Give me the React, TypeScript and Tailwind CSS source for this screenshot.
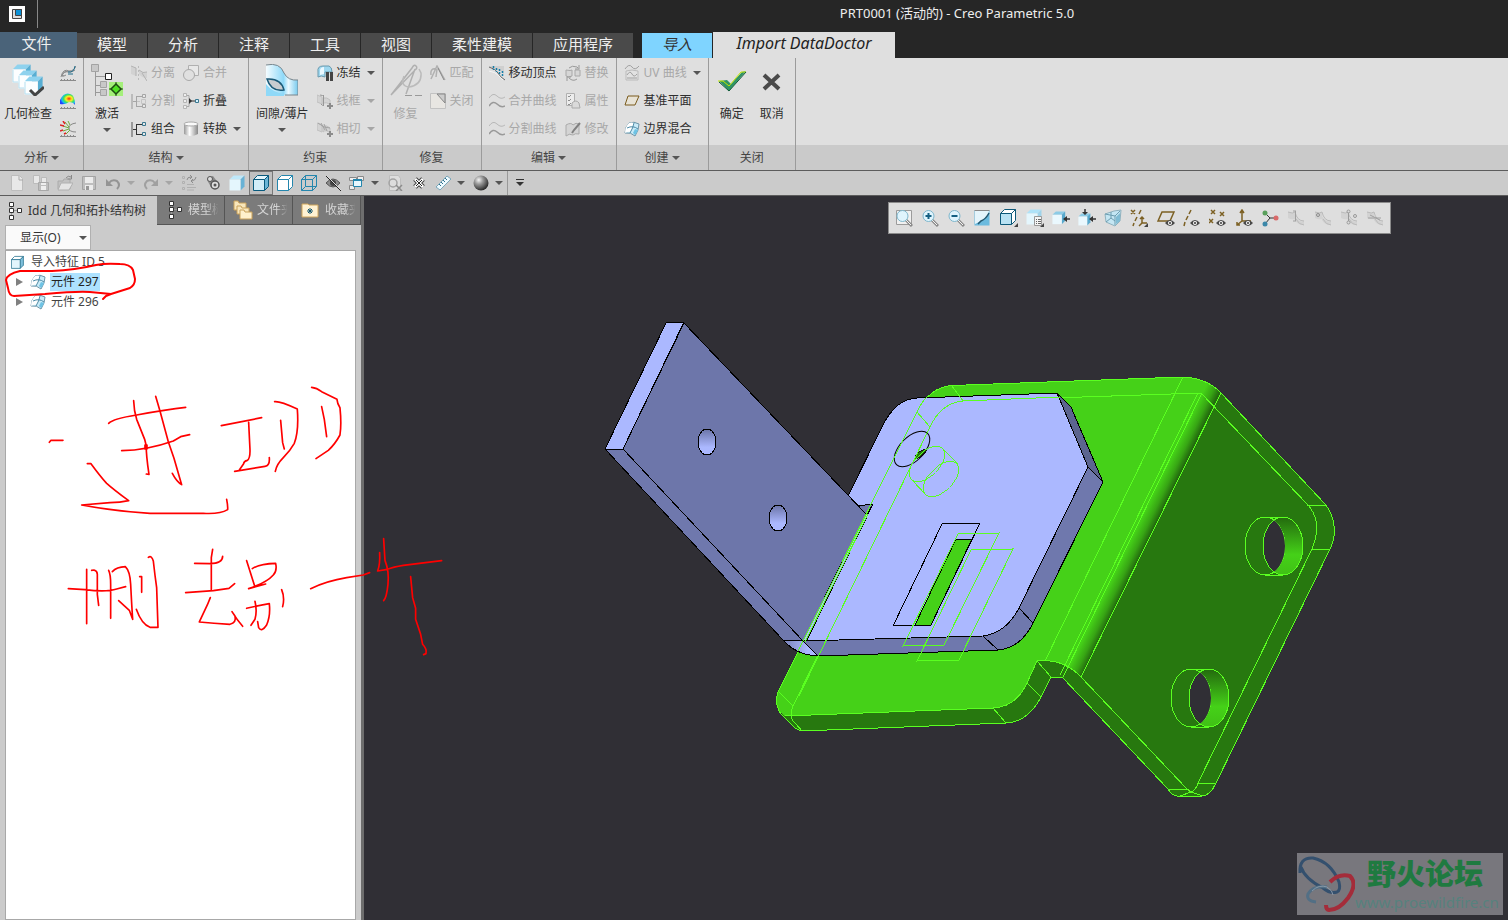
import type { ReactNode } from "react";

interface SvgProps {
  size?: number;
  width?: number;
  className?: string;
  children: ReactNode;
}

const Svg = ({ size = 16, width, className = "", children }: SvgProps) => (
  <svg
    width={width ?? size}
    height={size}
    viewBox={`0 0 ${width ?? size} ${size}`}
    fill="none"
    aria-hidden="true"
    className={`shrink-0 ${className}`}
  >
    {children}
  </svg>
);

const Caret = ({ light = false }: { light?: boolean }) => (
  <Svg size={4} width={8}>
    <path d="M0 0h8L4 4z" fill={light ? "#a6a6a6" : "#555"} />
  </Svg>
);

const Cube = ({ x = 0, y = 0, s = 1, top = "#c9ecfb", front = "#fff", side = "#4fa8d0", line = "none" }) => (
  <g transform={`translate(${x} ${y}) scale(${s})`} stroke={line} strokeLinejoin="round">
    <path d="M.5 4.500l4-4h11l-4 4z" fill={top} />
    <path d="M11.500 4.500l4-4v11l-4 4z" fill={side} />
    <path d="M.5 4.500h11v11H.5z" fill={front} />
  </g>
);

const Ruler = ({ y = 15 }) => (
  <path d={`M0 ${y + 0.5}h16M1.500 ${y - 1}v1M4.500 ${y - 1}v1M7.500 ${y - 1}v1M10.500 ${y - 1}v1M13.500 ${y - 1}v1`} stroke="#8a8a8a" />
);

const Eye = ({ x = 0, y = 0 }) => (
  <g transform={`translate(${x} ${y})`}>
    <path d="M0 3q5-6 10 0q-5 6-10 0z" fill="#4a4a4a" />
    <circle cx="5" cy="3" r="2" fill="#fff" />
    <circle cx="5" cy="3" r="1" fill="#333" />
  </g>
);

const Quilt = () => (
  <Svg>
    <path d="M5 2q5-2 10 1q0 6-4 12q-4-4-10-3q0-6 4-10z" fill="#c9ebf8" stroke="#6c95a8" />
    <path d="M5 2q3-1 5 0q-1 5-3 9-3-1-6 1q0-6 4-10z" fill="#fff" />
    <path d="M10 2q-1 5-4 10M3 7q6-3 11 1" stroke="#4c8aa6" />
    <path d="M11 8l3 1q-1 3-3 5l-2-2z" fill="#6fc3e4" />
  </Svg>
);

const Wave = () => (
  <Svg>
    <path d="M0 5q4-6 8-2t8 1" stroke="#b8b8b8" />
    <path d="M0 13q4-6 8-2t8 2" stroke="#999" strokeWidth="1.500" />
  </Svg>
);

const Brackets = ({ off = false, mid = false }) => (
  <Svg>
    <path d="M1 1v15" stroke={off ? "#bbb" : "#999"} strokeWidth="2" />
    <path d="M2 8.500h4M5.500 3v11M5 3.500h6M5 13.500h6" stroke={off ? "#a5a5a5" : "#333"} />
    {mid && <path d="M6 8.500h3M10.500 6.500h4v4h-4z" stroke="#c4c4c4" />}
    <path d="M11.500 1.500h3v3h-3zM11.500 11.500h3v3h-3z" fill="#e6e6e6" stroke={off ? "#a5a5a5" : "#3b7890"} />
  </Svg>
);

const CurvePlus = ({ bars = false }) => (
  <Svg>
    <path d="M0 2l5 2v7l-5-2zM6 5q4-1 7 2v5q-4-4-7-1z" fill="#d3d3d3" stroke="#c0c0c0" />
    {bars ? <path d="M1 2l6 4 6 1M4 2l4 7M7 3l3 7" stroke="#a3a3a3" /> : <path d="M6.500 2v11M3 2q3 0 4 2M7 12q-2 1-3-1" stroke="#979797" />}
    <path d="M13 10v6M10 13h6" stroke="#8c8c8c" strokeWidth="2" />
  </Svg>
);

const Sheet = ({ kind }: { kind: "line" | "dot" | "dots" | "cross" }) => (
  <Svg size={18}>
    <path d="M1 3q5 2 7 0v7q-4 1-7-1zM8 7q4 7 9 5v4q-7 0-9-5z" fill="#d2d2d2" />
    <path d="M1 3q5 2 7 0q2 9 9 9M9 10q3 6 8 6" stroke="#bababa" />
    {kind === "line" && <path d="M8.500 2v10M6 2h3M6 12h3" stroke="#a0a0a0" />}
    {kind === "dot" && <circle cx="4" cy="6" r="1.500" stroke="#8c8c8c" />}
    {kind === "dots" && (
      <g stroke="#999">
        <path d="M8.500 4v8" />
        <circle cx="8.500" cy="2.500" r="1.500" />
        <circle cx="8.500" cy="13.500" r="1.500" />
        <circle cx="15" cy="7" r="1.500" />
      </g>
    )}
    {kind === "cross" && <path d="M2 9h13M4 6l10 5" stroke="#a0a0a0" />}
  </Svg>
);

const Magnifier = ({ sign = "" }) => (
  <Svg size={18}>
    {sign === "" && <path d="M1.500 1.500h15v14h-15z" fill="#f0f0f0" stroke="#9b9b9b" />}
    <path d="M10 10l7 7" stroke="#8a8a8a" strokeWidth="3" />
    <path d="M11 11l5 5" stroke="#f4f4f4" />
    <circle cx="7.500" cy="7" r="5.500" fill="#dff4fd" stroke="#7eb6cc" />
    {sign !== "" && <path d={sign} stroke="#156083" strokeWidth="2" />}
  </Svg>
);

const BoxTree = ({ className = "" }) => (
  <Svg size={20} width={14} className={className}>
    <path d="M3.500 3v13M5 9.500h4" stroke="#999" />
    <path d="M1.500 1.500h4v4h-4zM1.500 7.500h4v4h-4zM1.500 14.500h4v4h-4zM9.500 7.500h4v4h-4z" fill="#fff" stroke="#333" />
  </Svg>
);

const icons: Record<string, ReactNode> = {
  analyzeCurve: (
    <Svg>
      <path d="M1 12q2-9 8-6q5 0 7-5M3 12q-2-5 5-6M6 10q-2 2-4 0q2-4 7-3q4 0 6-2" stroke="#8a8a8a" />
      <path d="M8 7q6 1 7-6M8 9h5" stroke="#1d6b8a" />
      <Ruler />
    </Svg>
  ),
  rainbow: (
    <Svg>
      <defs>
        <radialGradient id="rainbow" cx=".6" cy=".45" r=".6">
          <stop offset="0" stopColor="#ff2a10" />
          <stop offset=".35" stopColor="#ffef20" />
          <stop offset=".6" stopColor="#3be060" />
          <stop offset=".8" stopColor="#18bff0" />
          <stop offset="1" stopColor="#2443ff" />
        </radialGradient>
      </defs>
      <path d="M0 7q4-8 10-6q5 1 5 11q-2-3-6-3-4 3-9 2z" fill="url(#rainbow)" />
      <Ruler />
    </Svg>
  ),
  spikes: (
    <Svg>
      <path d="M16 2q-7 1-7 5t7 4" stroke="#888" />
      <path d="M9 7L3 5M9 6L5 1M10 4L8 0M9 8l-6 2M10 9l-4 4" stroke="#6fae3d" />
      <path d="M4 5L0 4M5 3L3 0M3 9l-3 1M6 12l-2 1" stroke="#d22" strokeWidth="1.500" />
      <Ruler />
    </Svg>
  ),
  detach: (
    <Svg>
      <path d="M0 1l5 2v8l-5-2zM8 5q4 4 8 2v6q-5 0-8-4z" fill="#d2d2d2" />
      <path d="M0 1l5 2v8M8 5q4 4 8 2M11 8l5 8" stroke="#b2b2b2" />
      <path d="M7.500 1v14" stroke="#bbb" strokeDasharray="2 2" />
    </Svg>
  ),
  merge: (
    <Svg>
      <path d="M5.500.500h10v10h-10z" fill="#e8e8e8" stroke="#b0b0b0" />
      <circle cx="6" cy="10" r="5.500" fill="#e0e0e0" stroke="#a8a8a8" />
    </Svg>
  ),
  split: <Brackets off mid />,
  combine: <Brackets />,
  collapse: (
    <Svg>
      <path d="M3 2.500h3v11H3" stroke="#aaa" />
      <path d="M.5.500h3v3h-3zM.5 6.500h3v3h-3zM.5 12.500h3v3h-3z" fill="#eee" stroke="#b5b5b5" />
      <path d="M6 5l3 3-3 3z" fill="#333" />
      <path d="M6 8h6" stroke="#333" />
      <path d="M12.500 6.500h3v3h-3z" fill="#d6f2ff" stroke="#3b7890" />
    </Svg>
  ),
  convert: (
    <Svg>
      <defs>
        <linearGradient id="cyl">
          <stop offset="0" stopColor="#999" />
          <stop offset=".4" stopColor="#fff" />
          <stop offset="1" stopColor="#888" />
        </linearGradient>
      </defs>
      <path d="M1 3q7-4 14 0v10q-7 4-14 0z" fill="url(#cyl)" />
      <ellipse cx="8" cy="3" rx="7" ry="2" fill="#fafafa" stroke="#aaa" />
    </Svg>
  ),
  freeze: (
    <Svg>
      <path d="M1 7q-1-6 5-6h6q3 1 3 6H8v5q-4-2-7 0z" fill="#9ed7ef" stroke="#6a9aae" />
      <path d="M3 6q0-4 4-4v7l-4 1z" fill="#eaf8ff" />
      <path d="M9 7h3v9H9zM13 7h3v9h-3z" fill="#444" />
    </Svg>
  ),
  wireframe: <CurvePlus />,
  tangent: <CurvePlus bars />,
  match: (
    <Svg>
      <path d="M1 14L7 1l8 14M1 10Q0 3 6 4M7 4L6 12" stroke="#b0b0b0" strokeWidth="1.500" />
      <path d="M8 3l6 12" stroke="#888" />
    </Svg>
  ),
  closeGap: (
    <Svg>
      <path d="M.5.500h15v15H.5z" fill="#e8e6e2" stroke="#c2c2c2" />
      <path d="M7 1h8v9z" fill="#ccc" stroke="#888" />
    </Svg>
  ),
  moveVertex: (
    <Svg>
      <path d="M0 1h15v8q-4-4-7-4-4-1-8-4z" fill="#cfcfcf" />
      <path d="M0 2q7 2 9 6t7 7" stroke="#666" />
      <path d="M0 6q6 1 9 4t5 5" stroke="#f4f4f4" />
      <path d="M4.500 1v4M7.500 3v4M10.500 4v6M13.500 6v6" stroke="#157da8" strokeWidth="1.500" strokeDasharray="2 1" />
    </Svg>
  ),
  wave: <Wave />,
  replace: (
    <Svg>
      <path d="M1 5q5 1 6 0v6q-4 2-6 0zM10 5h5v6h-5z" fill="#d6d6d6" stroke="#a8a8a8" />
      <path d="M4 3q3-3 8-1l1 1M14 0v4h-4M12 14q-4 3-8-1M2 16v-4h4" stroke="#999" />
    </Svg>
  ),
  attributes: (
    <Svg>
      <path d="M1.500.500h8v12h-8z" fill="#ececec" stroke="#b0b0b0" />
      <path d="M3 3l1 1 2-2M3 7l1 1 2-2M3 11l1 1 2-2" stroke="#8e8e8e" />
      <path d="M7 15v-5q4-4 7 0l1 5z" fill="#dadada" stroke="#aaa" />
    </Svg>
  ),
  modify: (
    <Svg>
      <path d="M1 4q5-3 7 0q3-3 6-1v10q-4-1-6 1-4-2-7 1z" fill="#d4d4d4" stroke="#aaa" />
      <path d="M15 2l-6 7-2 3" stroke="#808080" strokeWidth="2" />
    </Svg>
  ),
  uvCurve: (
    <Svg>
      <path d="M2 6q6-2 12 0v9H2z" fill="#e2e2e2" stroke="#bbb" />
      <path d="M1 4q4-6 7-2t7-1M3 10q3-5 5-1t5 0M3 13h10" stroke="#a0a0a0" />
    </Svg>
  ),
  plane: (
    <Svg>
      <path d="M4 3h11l-4 9H1z" fill="#e8e3d6" stroke="#7a5b1c" />
    </Svg>
  ),
  quilt: <Quilt />,
};

interface RibbonItemProps {
  icon: string;
  label?: string;
  off?: boolean;
  menu?: boolean;
  name?: string;
}

const RibbonItem = ({ icon, label, off, menu, name }: RibbonItemProps) => (
  <button
    type="button"
    disabled={off}
    aria-label={label ?? name}
    className={`flex h-7 items-center gap-1 whitespace-nowrap ${off ? "text-[#a8a8a8]" : "text-[#2e2e2e]"}`}
  >
    {icons[icon]}
    {label && <span>{label}</span>}
    {menu && (
      <span className="ml-auto pl-0.5">
        <Caret light={off && icon !== "uvCurve"} />
      </span>
    )}
  </button>
);

const Column = ({ items }: { items: RibbonItemProps[] }) => (
  <div className="flex flex-col">
    {items.map((item) => (
      <RibbonItem key={item.label ?? item.name} {...item} />
    ))}
  </div>
);

interface BigButtonProps {
  label: string;
  icon: ReactNode;
  off?: boolean;
  menu?: boolean;
}

const BigButton = ({ label, icon, off, menu }: BigButtonProps) => (
  <button
    type="button"
    disabled={off}
    className={`flex min-w-8 flex-col items-center whitespace-nowrap pt-[5px] ${off ? "text-[#a8a8a8]" : "text-[#2e2e2e]"}`}
  >
    {icon}
    <span className="mt-2.5 mb-1.5 leading-4">{label}</span>
    {menu && <Caret />}
  </button>
);

const Group = ({ title, menu, first, children }: { title: string; menu?: boolean; first?: boolean; children: ReactNode }) => (
  <section className="flex flex-col border-r border-[#9b9b9b]">
    <div className={`flex h-[87px] gap-2 pt-px pr-[7px] ${first ? "pl-1" : "pl-[7px]"}`}>{children}</div>
    <div className="flex h-[25px] items-center justify-center gap-[3px] bg-[#cacaca] text-[#444]">
      {title}
      {menu && <Caret />}
    </div>
  </section>
);

const GeometryCheckIcon = () => (
  <Svg size={32}>
    {[0, 6, 12].map((step) => (
      <Cube key={step} x={step} y={step} s={1.2} top="#8fd2ee" front="#fcfeff" side="#58aed3" />
    ))}
    <path d="M1 6v12h5M7 12v12h5M13 18v12h8" stroke="#b4dff0" />
    <path d="M18 26l5 5 9-8" stroke="#444" strokeWidth="3" />
  </Svg>
);

const ActivateIcon = () => (
  <Svg size={32}>
    <path d="M4.500 8v24M4 12.500h10M4 21.500h6M4 28.500h6" stroke="#999" />
    <path d="M.5.500h7v7h-7zM9.500 17.500h6v6h-6zM9.500 25.500h6v6h-6z" fill="#c8c8c8" stroke="#a3a3a3" />
    <path d="M14.500 9.500h6v6h-6z" fill="#fff" stroke="#222" />
    <path d="M18 18h14v14H18z" fill="#a4ef7a" />
    <path d="M25 18v14M18 25h14" stroke="#224f14" />
    <path d="M25 20l5 5-5 5-5-5z" fill="#4fe022" stroke="#1d4b12" strokeWidth="1.500" />
  </Svg>
);

const GapIcon = () => (
  <Svg size={32}>
    <defs>
      <linearGradient id="gap">
        <stop offset="0" stopColor="#f4fcff" />
        <stop offset=".55" stopColor="#8fd9f8" />
        <stop offset=".7" stopColor="#eaf9ff" />
        <stop offset="1" stopColor="#76c9ed" />
      </linearGradient>
    </defs>
    <path d="M0 1q14-3 18 8 4 8 14 7v15h-15q-5-2-17 1z" fill="url(#gap)" />
    <path d="M0 1q14-3 18 8 4 8 14 7v15h-13" stroke="#78858c" />
    <path d="M1 15q14-1 17 11-13 2-17-11z" fill="#c9cdd0" stroke="#1b5a78" strokeWidth="1.500" />
    <path d="M0 20q6 8 18 10v2H0z" fill="#8fd9f8" />
  </Svg>
);

const RepairIcon = () => (
  <Svg size={32}>
    <path d="M1 31L22 4q2-4 4-2t-1 4L1 31M25 5l-9 25" stroke="#b0b0b0" strokeWidth="1.500" />
    <path d="M14 12q-4 10 5 11 13-2 12-14l-2-4" stroke="#bbb" strokeWidth="1.500" />
    <path d="M15 31.500h7M25 31.500h7" stroke="#999" />
  </Svg>
);

const OkIcon = () => (
  <Svg size={32}>
    <path d="M3 17l8-1 4 4L26 8l4-1-17 20z" fill="#2f9563" />
    <path d="M2 17h5l6 5L25 8h5" stroke="#c4e600" />
    <path d="M3 18l10 9L30 8" stroke="#0f5a38" />
  </Svg>
);

const CancelIcon = () => (
  <Svg size={32}>
    <path d="M8 11l15 14M23 11L8 25" stroke="#4a4a4a" strokeWidth="4" />
  </Svg>
);

const TABS = ["模型", "分析", "注释", "工具", "视图", "柔性建模", "应用程序"];

const Ribbon = () => (
  <div className="flex h-[113px] border-b border-[#5c5c5c] bg-[#dfdfdf]">
    <Group title="分析" menu first>
      <BigButton label="几何检查" icon={<GeometryCheckIcon />} />
      <Column
        items={[
          { icon: "analyzeCurve", name: "曲率" },
          { icon: "rainbow", name: "着色曲率" },
          { icon: "spikes", name: "偏差" },
        ]}
      />
    </Group>
    <Group title="结构" menu>
      <BigButton label="激活" icon={<ActivateIcon />} menu />
      <Column
        items={[
          { icon: "detach", label: "分离", off: true },
          { icon: "split", label: "分割", off: true },
          { icon: "combine", label: "组合" },
        ]}
      />
      <Column
        items={[
          { icon: "merge", label: "合并", off: true },
          { icon: "collapse", label: "折叠" },
          { icon: "convert", label: "转换", menu: true },
        ]}
      />
    </Group>
    <Group title="约束">
      <BigButton label="间隙/薄片" icon={<GapIcon />} menu />
      <Column
        items={[
          { icon: "freeze", label: "冻结", menu: true },
          { icon: "wireframe", label: "线框", off: true, menu: true },
          { icon: "tangent", label: "相切", off: true, menu: true },
        ]}
      />
    </Group>
    <Group title="修复">
      <BigButton label="修复" icon={<RepairIcon />} off />
      <Column
        items={[
          { icon: "match", label: "匹配", off: true },
          { icon: "closeGap", label: "关闭", off: true },
        ]}
      />
    </Group>
    <Group title="编辑" menu>
      <Column
        items={[
          { icon: "moveVertex", label: "移动顶点" },
          { icon: "wave", label: "合并曲线", off: true },
          { icon: "wave", label: "分割曲线", off: true },
        ]}
      />
      <Column
        items={[
          { icon: "replace", label: "替换", off: true },
          { icon: "attributes", label: "属性", off: true },
          { icon: "modify", label: "修改", off: true },
        ]}
      />
    </Group>
    <Group title="创建" menu>
      <Column
        items={[
          { icon: "uvCurve", label: "UV 曲线", off: true, menu: true },
          { icon: "plane", label: "基准平面" },
          { icon: "quilt", label: "边界混合" },
        ]}
      />
    </Group>
    <Group title="关闭">
      <BigButton label="确定" icon={<OkIcon />} />
      <BigButton label="取消" icon={<CancelIcon />} />
    </Group>
    <div className="mt-[87px] flex-1 bg-[#cacaca]" />
  </div>
);

const QUICK_ITEMS: { name: string; icon: ReactNode; menu?: "on" | "off"; active?: boolean }[] = [
  {
    name: "新建",
    icon: (
      <Svg>
        <path d="M2.500.500h8l3 3v12h-11z" fill="#e8e8e8" stroke="#bdbdbd" />
        <path d="M10 1v4h4" stroke="#aaa" />
      </Svg>
    ),
  },
  {
    name: "打开最近",
    icon: (
      <Svg>
        <path d="M.5.500h6v8h-6zM8.500 2.500h5v6h-5z" fill="#e8e8e8" stroke="#bbb" />
        <path d="M5.500 7.500h10v8h-10z" fill="#bdbdbd" stroke="#a8a8a8" />
        <path d="M8 11h5v4H8zM8 8h5v2H8z" fill="#eee" />
      </Svg>
    ),
  },
  {
    name: "打开",
    icon: (
      <Svg>
        <path d="M1 6h5l1-2h6v10H1z" fill="#c2c2c2" stroke="#aaa" />
        <path d="M4 8h12l-4 7H1z" fill="#e4e4e4" stroke="#b0b0b0" />
        <path d="M9 3q2-3 5-1M14.500 0v4h-4" stroke="#888" />
      </Svg>
    ),
  },
  {
    name: "保存",
    icon: (
      <Svg>
        <path d="M1.500 1.500h13v13h-13z" fill="#bebebe" stroke="#a3a3a3" />
        <path d="M4 2h8v6H4zM4 10h8v5H4z" fill="#ececec" />
        <path d="M5 11h3v4H5z" fill="#999" />
      </Svg>
    ),
  },
  {
    name: "撤消",
    menu: "off",
    icon: (
      <Svg>
        <path d="M1 4v7h7z" fill="#949494" />
        <path d="M4 8q3-4 8-2 4 4 0 8" stroke="#949494" strokeWidth="2" />
      </Svg>
    ),
  },
  {
    name: "重做",
    menu: "off",
    icon: (
      <Svg>
        <path d="M15 4v7H8z" fill="#a0a0a0" />
        <path d="M12 8q-3-4-8-2-4 4 0 8" stroke="#a0a0a0" strokeWidth="2" />
      </Svg>
    ),
  },
  {
    name: "重新生成",
    icon: (
      <Svg>
        <path d="M1.500 1.500h2v2h-2zM1.500 6.500h2v2h-2zM1.500 12.500h2v2h-2zM6 9.500h7M6 12.500h9M6 15h7" stroke="#b0b0b0" />
        <path d="M6 5q0-3 4-3M9 0l2 2-2 2M15 2q0 3-4 4M12 4l-2 2 2 2" stroke="#8c8c8c" />
      </Svg>
    ),
  },
  {
    name: "链接",
    icon: (
      <Svg>
        <path d="M3 2l5-1 6 8-3 5-5-2-4-7z" fill="#8a8a8a" />
        <circle cx="5" cy="4" r="2.500" fill="#ddd" stroke="#555" />
        <circle cx="10" cy="10" r="4" fill="#ddd" stroke="#555" strokeWidth="1.500" />
        <circle cx="10" cy="10" r="1.500" fill="#555" />
      </Svg>
    ),
  },
  { name: "着色", icon: <Svg><Cube top="#bfe8f9" front="#e4f6fd" side="#69b2d5" /></Svg> },
  { name: "带边着色", active: true, icon: <Svg><Cube top="#e4f6fd" front="#d2edf8" side="#6bb5d6" line="#085a7d" /></Svg> },
  { name: "消隐", icon: <Svg><Cube top="#fff" side="#fff" line="#2486ad" /></Svg> },
  {
    name: "线框",
    icon: (
      <Svg>
        <Cube top="none" front="none" side="none" line="#2486ad" />
        <path d="M4.500.500v11h11M4.500 11.500l-4 4" stroke="#2486ad" />
      </Svg>
    ),
  },
  {
    name: "隐藏",
    icon: (
      <Svg>
        <path d="M1 8q7-8 14 0-7 8-14 0z" fill="#8c8c8c" stroke="#555" />
        <circle cx="8" cy="8" r="3" fill="#444" />
        <path d="M2 1l14 14" stroke="#ddd" />
        <path d="M1 1l15 15" stroke="#222" />
      </Svg>
    ),
  },
  {
    name: "窗口",
    menu: "on",
    icon: (
      <Svg>
        <path d="M.5 2.500h7v3h-7zM.5 10.500h5v4h-5zM8.500 1.500h6v4h-6z" fill="#eee" stroke="#888" />
        <path d="M4.500 4.500h8v7h-8z" fill="#e8f7fd" stroke="#2486ad" />
        <path d="M4 5h9" stroke="#2486ad" strokeWidth="2" />
      </Svg>
    ),
  },
  {
    name: "查找",
    icon: (
      <Svg>
        <path d="M2.500.500h9l2 3v12h-11z" fill="#ddd" stroke="#bdbdbd" />
        <circle cx="6" cy="8" r="4" stroke="#a3a3a3" strokeWidth="1.500" />
        <path d="M9 10l6 6M15 10l-6 6" stroke="#8c8c8c" strokeWidth="1.500" />
      </Svg>
    ),
  },
  {
    name: "关闭窗口",
    icon: (
      <Svg>
        <path d="M4 4l8 8M12 4l-8 8" stroke="#444" strokeWidth="5" />
        <path d="M4 4l8 8M12 4l-8 8" stroke="#fff" strokeWidth="3" />
        <path d="M5 5l6 6M11 5l-6 6" stroke="#222" />
      </Svg>
    ),
  },
  {
    name: "测量",
    menu: "on",
    icon: (
      <Svg>
        <path d="M1 12L12 1l4 3L5 15z" fill="#eefaff" stroke="#7aa7ba" />
        <path d="M4 9l2 2M6 7l2 2M8 5l2 2M10 3l2 2" stroke="#2f718e" />
      </Svg>
    ),
  },
  {
    name: "外观",
    menu: "on",
    icon: (
      <Svg>
        <defs>
          <radialGradient id="ball" cx=".35" cy=".3" r=".7">
            <stop offset="0" stopColor="#f5f5f5" />
            <stop offset=".4" stopColor="#999" />
            <stop offset="1" stopColor="#2e2e2e" />
          </radialGradient>
        </defs>
        <circle cx="8" cy="8" r="7.500" fill="url(#ball)" />
      </Svg>
    ),
  },
];

const QuickBar = () => (
  <div className="flex h-[25px] items-center border-b border-[#5c5c5c] bg-[#cbcbcb] pl-[5px]">
    {QUICK_ITEMS.map(({ name, icon, menu, active }) => (
      <button
        key={name}
        type="button"
        aria-label={name}
        className={`flex h-6 items-center justify-center ${menu ? "w-[38px] gap-1.5" : "w-6"} ${
          active ? "border border-[#777] bg-[#c0c0c0]" : ""
        }`}
      >
        {icon}
        {menu && <Caret light={menu === "off"} />}
      </button>
    ))}
    <button type="button" aria-label="自定义" className="flex h-6 w-6 items-center justify-center border-l border-[#999]">
      <Svg size={8} width={10}>
        <path d="M1 .5h8" stroke="#333" />
        <path d="M1 3h8L5 7z" fill="#333" />
      </Svg>
    </button>
  </div>
);

const Datum = ({ d, children }: { d: string; children?: ReactNode }) => (
  <Svg size={18}>
    <path d={d} stroke="#7c6023" strokeWidth="1.500" />
    {children}
  </Svg>
);

const Corner = () => <path d="M18 14v4h-4z" fill="#444" />;

const VIEW_ITEMS: { name: string; icon: ReactNode }[] = [
  { name: "重新调整", icon: <Magnifier /> },
  { name: "放大", icon: <Magnifier sign="M7.500 4v6M4.500 7h6" /> },
  { name: "缩小", icon: <Magnifier sign="M4.500 7h6" /> },
  {
    name: "重画",
    icon: (
      <Svg size={18}>
        <path d="M1.500 1.500h15v15h-15z" fill="#6bbade" />
        <path d="M2 2h14q-1 8-14 13z" fill="#e4f4fb" />
        <path d="M1.500 1.500h15" stroke="#888" />
        <path d="M16 4q-3 6-8 8l-3 3" stroke="#24586f" strokeWidth="1.500" />
      </Svg>
    ),
  },
  { name: "显示样式", icon: <Svg size={18}><Cube line="#0c5878" top="#fff" front="#b9e2f3" side="#fff" /><Corner /></Svg> },
  {
    name: "已保存方向",
    icon: (
      <Svg size={18}>
        <Cube top="#aee2f8" front="#e4f6fd" side="#9fd3ea" />
        <path d="M8.500 7.500h7v9h-7z" fill="#f5f5f5" stroke="#999" />
        <path d="M10 10.500h1M12 10.500h3M10 12.500h1M12 12.500h3M10 14.500h1M12 14.500h3" stroke="#666" />
        <Corner />
      </Svg>
    ),
  },
  {
    name: "视图管理器",
    icon: (
      <Svg size={18}>
        <Cube y={2} s={0.85} front="#eaf8fe" top="#8ccbe6" side="#58a9cd" />
        <path d="M12 10h6" stroke="#333" strokeWidth="1.500" />
        <path d="M11 10l4-3v6z" fill="#333" />
      </Svg>
    ),
  },
  {
    name: "方向",
    icon: (
      <Svg size={18}>
        <Cube y={4} s={0.8} front="#eaf8fe" top="#8ccbe6" side="#58a9cd" />
        <path d="M7 0v5M12 10h6" stroke="#333" strokeWidth="1.500" />
        <path d="M11 10l4-3v6zM7 6L4 3h6z" fill="#333" />
      </Svg>
    ),
  },
  {
    name: "透视图",
    icon: (
      <Svg size={18}>
        <path d="M1 5l9-3 7-1-1 11-5 5-9-4z" fill="#c4e6f3" stroke="#8fb1be" />
        <path d="M1 5l10 2v9M11 7l5-5M2 13l5-4 4 3M7 3v6" stroke="#6c9db0" />
        <path d="M12 8l4-4v8l-4 3z" fill="#7fbcd4" />
      </Svg>
    ),
  },
  {
    name: "基准显示",
    icon: (
      <Datum d="M1 1l4 4M5 1L1 5M11 1L9 5M7 8l-2 4M4 14l-1 3M12 8v6h5M12 14l-3 3M10 10l2-2 2 2">
        <Corner />
      </Datum>
    ),
  },
  { name: "平面显示", icon: <Datum d="M5 3h12l-4 9H1z"><Eye x={8} y={11} /></Datum> },
  { name: "轴显示", icon: <Datum d="M8 1L6 5M5 7l-2 4M2 13l-1 4"><Eye x={7} y={11} /></Datum> },
  { name: "点显示", icon: <Datum d="M2 1l4 4M6 1L2 5M11 3l4 4M15 3l-4 4M0 10l4 4M4 10l-4 4"><Eye x={7} y={11} /></Datum> },
  { name: "坐标系显示", icon: <Datum d="M7 1v11h9M7 12l-5 4M5 4l2-3 2 3M2 13v3h3"><Eye x={8} y={11} /></Datum> },
  {
    name: "旋转中心",
    icon: (
      <Svg size={18}>
        <path d="M4 4l5 5h6M9 9l-5 6" stroke="#333" />
        <circle cx="4" cy="4" r="2.500" fill="#5aa05c" />
        <circle cx="15" cy="9" r="2.500" fill="#d96a6a" />
        <circle cx="4" cy="15" r="2.500" fill="#3b87a8" />
      </Svg>
    ),
  },
  { name: "边线", icon: <Sheet kind="line" /> },
  { name: "顶点", icon: <Sheet kind="dot" /> },
  { name: "节点", icon: <Sheet kind="dots" /> },
  { name: "交叉", icon: <Sheet kind="cross" /> },
];

const ViewToolbar = () => (
  <div className="absolute top-1.5 right-[117px] flex h-8 w-[503px] items-center justify-between border border-[#8b8b8b] bg-[#dedede] px-1.5">
    {VIEW_ITEMS.map(({ name, icon }) => (
      <button key={name} type="button" aria-label={name} className="block">
        {icon}
      </button>
    ))}
  </div>
);

const FoldersIcon = () => (
  <Svg size={20} width={20}>
    <path d="M1 1h4l1 2h7v7H1z" fill="#f8e6bb" stroke="#c9a15a" />
    <path d="M4 6h4l1 2h7v6H4z" fill="#f8e6bb" stroke="#c9a15a" />
    <path d="M7 10h4l1 2h7v7H7z" fill="#fff0cb" stroke="#c9a15a" />
  </Svg>
);

const FavoriteIcon = () => (
  <Svg size={16} width={18}>
    <path d="M1 2h6l1 1h9v12H1z" fill="#fff2d3" stroke="#d0a65c" />
    <path d="M9 6v6M6 9h6M7 7l4 4M11 7l-4 4" stroke="#15566f" />
  </Svg>
);

const SIDE_TABS = [
  { label: "模型树", icon: <BoxTree />, pad: "pl-[11px] gap-1.5" },
  { label: "文件夹", icon: <FoldersIcon />, pad: "pl-2 gap-1" },
  { label: "收藏夹", icon: <FavoriteIcon />, pad: "pl-2 gap-1.5" },
];

const TreeNode = ({ label, selected }: { label: string; selected?: boolean }) => (
  <li className="flex h-5 items-center pl-[9px]">
    <Svg size={10} width={8}>
      <path d="M1 1l7 4-7 4z" fill="#808080" />
    </Svg>
    <span className="ml-[7px] flex items-center gap-1">
      <Quilt />
      <span className={`px-px leading-[18px] ${selected ? "bg-[#aee2ff] text-[#222]" : ""}`}>{label}</span>
    </span>
  </li>
);

const Sidebar = () => (
  <aside className="flex w-[364px] shrink-0 flex-col border-r-[3px] border-[#6e6e6e] bg-[#cbcbcb]">
    <div className="flex h-[29px] bg-[#cbcbcb]">
      <button type="button" className="flex flex-1 items-center gap-1.5 pl-2 whitespace-nowrap text-[#333]">
        <BoxTree />
        Idd 几何和拓扑结构树
      </button>
      {SIDE_TABS.map(({ label, icon, pad }) => (
        <button
          key={label}
          type="button"
          className={`flex w-[68px] items-center border-r border-b border-[#555] bg-[#7b7b7b] text-[#d4d4d4] ${pad}`}
        >
          {icon}
          <span className="whitespace-nowrap [mask-image:linear-gradient(to_right,black_55%,transparent_85%)]">{label}</span>
        </button>
      ))}
    </div>
    <button
      type="button"
      className="ml-[5px] flex h-[25px] w-[86px] items-center justify-between border border-[#b0b0b0] bg-[#fafafa] pr-[3px] pl-3.5 text-[#333]"
    >
      显示(O)
      <Caret />
    </button>
    <div className="mr-[5px] ml-[5px] flex-1 border border-[#a8a8a8] bg-white text-[#444]">
      <div className="flex h-[21px] items-center gap-1 pl-[5px]">
        <Svg>
          <Cube y={2} s={0.8} line="#2b7592" top="#fff" front="#e2f5fc" side="#7fc0dc" />
        </Svg>
        导入特征 ID 5
      </div>
      <ul>
        <TreeNode label="元件 297" selected />
        <TreeNode label="元件 296" />
      </ul>
    </div>
  </aside>
);

const HOLES = [
  { id: "a", x: 1265, y: 546 },
  { id: "b", x: 1191, y: 698 },
];

const Model = () => (
  <svg
    viewBox="364 196 1144 724"
    preserveAspectRatio="xMidYMid slice"
    className="block h-full w-full"
    shapeRendering="crispEdges"
    role="img"
    aria-label="PRT0001"
    fill="none"
  >
    <defs>
      <linearGradient id="bend" gradientUnits="userSpaceOnUse" x1="1183" y1="377" x2="1220" y2="395">
        <stop offset="0" stopColor="#45d118" />
        <stop offset=".6" stopColor="#45d118" />
        <stop offset=".8" stopColor="#37a514" />
        <stop offset=".96" stopColor="#23690e" />
        <stop offset="1" stopColor="#27780f" />
      </linearGradient>
      <linearGradient id="bore" x1="0" y1="0" x2="0" y2="1">
        <stop offset="0" stopColor="#23690e" />
        <stop offset=".65" stopColor="#45d118" />
        <stop offset="1" stopColor="#40c016" />
      </linearGradient>
      <linearGradient id="pin" x1="0" y1="0" x2="0" y2="1">
        <stop offset="0" stopColor="#6a73a6" />
        <stop offset=".7" stopColor="#abb8ff" />
      </linearGradient>
      <linearGradient id="fold">
        <stop offset="0" stopColor="#7680b5" />
        <stop offset=".7" stopColor="#abb8ff" />
      </linearGradient>
      {HOLES.map(({ id, x, y }) => (
        <clipPath key={id} id={`bore-${id}`}>
          <ellipse cx={x} cy={y} rx="20" ry="29" />
        </clipPath>
      ))}
    </defs>

    {/* bright upper face of the green bracket */}
    <path
      d="M917 412Q930 387 952 385.500L1183 377Q1207 378 1221 393L1081 677L1051 677L1037 661L1027 683Q1016 707 993 708L785 716Q773 708 778 692z"
      fill="#45d118"
    />
    <path d="M1183 377Q1207 378 1221 393L1081 677Q1065 661 1045 661z" fill="url(#bend)" />
    {/* shaded faces */}
    <path
      d="M1221 393L1325 504C1334 515 1338 534 1330 549L1216 783Q1210 796 1202 796H1177Q1171 795 1168 789L1062 677H1051L1041 697Q1028 722 1006 723L802 731Q796 730 791 724L778 711L785 716L993 708Q1016 707 1027 683L1037 661Q1063 658 1081 677z"
      fill="#27780f"
    />
    <g stroke="#5aff20">
      <path d="M917 412Q930 387 952 385.500L1183 377Q1207 378 1221 393L1325 504C1334 515 1338 534 1330 549L1216 783Q1210 796 1202 796H1177Q1171 795 1168 789L1062 677H1051L1041 697Q1028 722 1006 723L802 731Q796 730 791 724L781 714Q774 704 778 692z" />
      <path d="M785 716L993 708Q1016 707 1027 683L1037 661Q1063 658 1081 677L1187 789L1191 792Q1196 790 1198 783L1312 549Q1323 522 1308 505L1201 393L963 401Q941 403 930 427L793 706Q788 718 796 724L802 731" />
      <path d="M1183 377L1045 661M1198 393L1060 675M1202 393L1063 677M1221 393L1081 677" />
      <path d="M993 708L1006 723M1027 683L1041 697M1037 661L1051 677M778 691L793 706M1307 505H1326M1312 549H1330M1198 783H1216M1168 789H1187M1191 792L1180 796M1191 792L1203 796" />
      {HOLES.map(({ id, x, y }) => (
        <g key={id}>
          <ellipse cx={x + 18} cy={y} rx="20" ry="29" fill="url(#bore)" />
          <ellipse cx={x} cy={y} rx="20" ry="29" fill="#27780f" />
          <ellipse cx={x + 18} cy={y} rx="20" ry="29" fill="#302f35" clipPath={`url(#bore-${id})`} />
          <path d={`M${x} ${y - 29}h18M${x} ${y + 29}h18`} />
        </g>
      ))}
    </g>

    {/* blue plate */}
    <g stroke="#000" strokeLinejoin="round">
      <path d="M1088 467L1103 482L1033 623Q1021 648 998 650L818 656L803 641L983 636Q1006 633 1019 608z" fill="#6f78ad" />
      <path d="M1057 393L1071 407L1103 482L1088 467z" fill="#5c658f" />
      <path d="M783 640Q796 655 818 656L803 641z" fill="url(#fold)" />
      <path d="M848 496L883 425Q896 399 917 398L1057 393L1088 467L1019 608Q1006 633 983 636L803 641z" fill="#abb8ff" />
      <path d="M983 636L998 650M1019 608L1033 623" />
      <path d="M857 506L873 504L867 515z" fill="#6f78ad" />
      <path d="M873 504L807 640" />
      {/* arm */}
      <path d="M605 449L623 449L803 641L783 640z" fill="#6f78ad" />
      <path d="M684 323L866 514L803 641L623 449z" fill="#6d76aa" />
      <path d="M666 323L684 322L623 449H605z" fill="#abb8ff" />
      <ellipse cx="707" cy="442" rx="9" ry="13" fill="url(#pin)" />
      <ellipse cx="778" cy="518" rx="9" ry="13" fill="url(#pin)" />
      <ellipse cx="912" cy="449" rx="22" ry="12" transform="rotate(-45 912 449)" />
      <path d="M942 524L980 523L931 625L893 626z" />
      <path d="M956 539H972L931 625H915z" fill="#45d118" />
    </g>
    <path d="M914 460Q917 450 927 449Q924 456 914 460z" fill="#27780f" stroke="#111" />

    {/* highlighted edges seen through the plate */}
    <g stroke="#5aff20">
      <path d="M917 412L798 651M799 696L930 427Q941 403 963 401L1060 397M917 412L930 427M952 386L963 401M917 412Q922 401 928 396" />
      <path d="M868 514L805 642" />
      <ellipse cx="927" cy="464" rx="22" ry="12" transform="rotate(-45 927 464)" />
      <ellipse cx="941" cy="479" rx="22" ry="12" transform="rotate(-45 941 479)" />
      <path d="M944 450L958 464M912 480L926 495" />
      <path d="M958 534L999 533L944 645L903 646zM971 550L1013 549L959 660L917 661z" />
    </g>
  </svg>
);

const Watermark = () => (
  <div className="absolute right-[5px] bottom-[5px] flex h-[62px] w-[206px] bg-[#78777d]">
    <svg width="58" height="62" viewBox="0 0 58 62" fill="none" aria-hidden="true" className="shrink-0">
      <path d="M3 20Q2 4 16 5q18 4 26 24 2 8-2 10-7 2-14-4Q8 26 4 14" stroke="#34506e" strokeWidth="3" />
      <path d="M33 29q9-9 20-6 8 8-2 22-9 12-19 12-3 0-3-5" stroke="#a42c3a" strokeWidth="4" />
      <path d="M30 34q-14-2-19 7-2 7 8 8" stroke="#526f85" strokeWidth="3" />
      <path d="M15 38q7-7 15-4M30 34q6 4 6 8" stroke="#8a99a8" />
    </svg>
    <div className="flex flex-col whitespace-nowrap">
      <span className="ml-3 h-[38px] text-[29px] leading-[42px] font-black text-[#1f7a40]">野火论坛</span>
      <span className="h-5 text-[15px] leading-[22px] text-[#56827e]">www.proewildfire.cn</span>
    </div>
  </div>
);

const Scribbles = () => (
  <svg
    width="460"
    height="680"
    viewBox="0 0 460 680"
    fill="none"
    stroke="#f00"
    strokeLinecap="round"
    strokeLinejoin="round"
    aria-hidden="true"
    className="pointer-events-none absolute top-0 left-0"
  >
    <path
      strokeWidth="2"
      d="M103 299L106 296L111 294L130 288Q135 285 135 279L133 270Q130 264 120 264Q105 263 96 265Q75 270 52 271H20Q7 274 6 280L8 288Q9 296 14 296L45 294Q78 291 90 292L111 294"
    />
    <g transform="translate(0 371) scale(.3333)" strokeWidth="5">
      <path d="M148 214L153 208H189M326 157Q340 143 410 132Q500 115 557 109M365 239Q440 238 520 210L542 197L569 191" />
      <path d="M401 89Q402 120 410 145L434 205L439 225Q438 250 447 310L439 309M435 222V234H441V222M467 76L480 120L505 212L522 262L545 341Q530 332 517 307" />
      <path d="M664 164L785 140M746 154L750 235Q751 262 742 268Q732 270 731 278L718 297M704 301L795 286Q810 284 808 260M842 148L848 215L853 234M824 92Q840 90 892 114Q897 180 883 217Q870 240 850 260Q830 280 826 301" />
      <path d="M965 107L973 145L980 197M935 49Q950 50 965 62L1011 85Q1012 98 1020 110Q1025 160 1020 192Q1005 220 985 238L948 263" />
      <path d="M262 278H273Q300 315 320 337Q340 355 386 389Q360 395 330 395L245 402Q340 420 450 427H610Q660 430 683 416Q684 405 680 385" />
      <path d="M205 653L255 656Q320 664 350 654L377 647M260 595V758M275 598L282 597Q292 600 292 610V670L296 703M326 598Q332 610 332 640V742M337 602Q350 588 376 587Q390 600 392 640Q395 700 398 745L388 718L356 689M419 617H425V664M445 559Q455 552 460 570Q465 615 470 650L474 769H450Q425 760 409 715" />
      <path d="M638 535L634 560V658M584 577L630 578Q668 578 668 556M557 665L640 659L687 652L704 638M631 680L622 702L598 753Q640 757 690 760Q710 755 705 735L696 722Q712 748 728 766" />
      <path d="M740 569L764 645M757 593Q780 578 827 577Q832 600 820 612Q800 635 746 653L797 639M740 712Q770 705 808 698Q812 735 800 762Q785 785 776 770L773 752M765 691Q772 720 765 745L753 763M845 656Q855 680 848 707" />
      <path d="M932 653Q980 630 1040 620L1090 612L1109 605M1139 545Q1141 580 1133 600L1162 595Q1180 588 1210 583L1325 569M1151 503L1155 568Q1168 600 1164 640Q1160 680 1151 689M1232 617L1238 680L1247 712V745L1262 790L1268 820Q1282 835 1278 848L1271 851" />
    </g>
  </svg>
);

const App = () => (
  <div className="relative flex h-screen min-h-[700px] flex-col overflow-hidden bg-[#302f35] font-['Noto_Sans','Noto_Sans_CJK_SC',sans-serif] text-xs">
    <header className="bg-[#262626]">
      <div className="flex h-8 items-start">
        <div className="flex h-7 items-center border-r border-[#888] pr-3 pl-[9px]">
          <Svg>
            <path d="M0 0h16v16H0z" fill="#fff" />
            <path d="M3.500 3.500h9v9h-9z" fill="#ddd" stroke="#444" />
            <path d="M6.500 3.500h6v6h-6z" fill="#0b91d6" stroke="#444" />
          </Svg>
        </div>
        <h1 className="flex-1 pl-[368px] text-center text-[13px] leading-[26px] text-[#eee]">PRT0001 (活动的) - Creo Parametric 5.0</h1>
      </div>
      <nav className="flex h-[26px] items-end text-[15px] leading-[22px] whitespace-nowrap text-[#eee]">
        <button type="button" className="h-full w-[77px] bg-[#4a6379] pr-1 pb-1">文件</button>
        <div className="flex h-[25px] gap-px">
          {TABS.map((tab) => (
            <button key={tab} type="button" className="bg-[#4a4a4a] px-5 pb-1">
              {tab}
            </button>
          ))}
        </div>
        <button type="button" className="ml-[9px] h-[25px] bg-[#7fd4ff] px-5 pb-1 text-[#333] italic">导入</button>
        <button type="button" className="ml-px h-full w-[182px] bg-[#dfdfdf] pb-1 text-base leading-[22px] text-[#222] italic">Import DataDoctor</button>
      </nav>
    </header>
    <Ribbon />
    <QuickBar />
    <div className="flex min-h-0 flex-1">
      <Sidebar />
      <main className="relative min-w-0 flex-1">
        <Model />
        <ViewToolbar />
        <Watermark />
      </main>
    </div>
    <Scribbles />
  </div>
);

export default App;
